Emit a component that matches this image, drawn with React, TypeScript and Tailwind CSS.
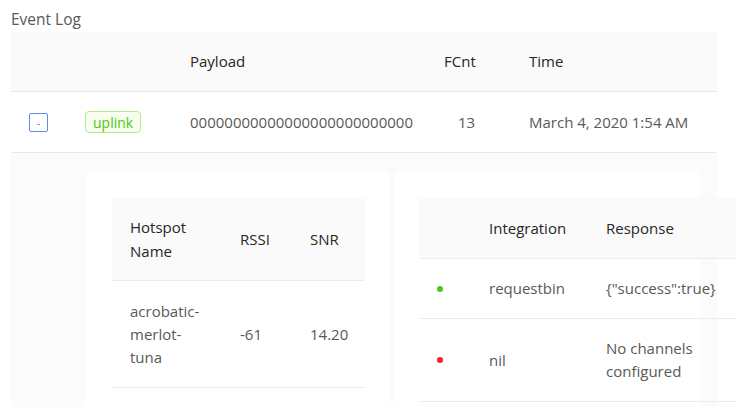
import React from 'react';

const font = { fontFamily: '"Open Sans", Lato, sans-serif' };

function Dot({ color }: { color: string }) {
  return <span className={`inline-block w-[6px] h-[6px] rounded-full ${color}`} />;
}

export default function App() {
  return (
    <div className="w-[740px] h-[407px] overflow-hidden bg-white relative" style={font}>
      <div className="pl-[11px] h-[32px] pt-[8px] flex items-center text-[15.5px] text-[#595959]">Event Log</div>

      <div className="ml-[11px] w-[706px]">
        {/* outer header */}
        <div className="flex h-[60px] items-center bg-[#fafafa] border-b border-[#e8e8e8] text-[15px] text-[#262626]">
          <div className="w-[56px]" />
          <div className="w-[105px]" />
          <div className="w-[254px] pl-[18px]">Payload</div>
          <div className="w-[85px] pl-[18px]">FCnt</div>
          <div className="w-[206px] pl-[18px]">Time</div>
        </div>

        {/* outer row */}
        <div className="flex h-[61px] items-center border-b border-[#e8e8e8] text-[15px] text-[#595959]">
          <div className="w-[56px] pl-[18px]">
            <button className="w-[19px] h-[19px] flex items-center justify-center rounded-[2px] border border-[#5b8def] bg-white text-[#4f7fd6] text-[11px] leading-none">
              -
            </button>
          </div>
          <div className="w-[105px] pl-[18px]">
            <span className="inline-flex items-center h-[22px] px-[7px] rounded-[4px] border border-[#b7eb8f] bg-[#f6ffed] text-[#52c41a] text-[14px]">
              uplink
            </span>
          </div>
          <div className="w-[254px] pl-[18px]">00000000000000000000000000</div>
          <div className="w-[85px] pl-[32px]">13</div>
          <div className="w-[206px] pl-[18px]">March 4, 2020 1:54 AM</div>
        </div>

        {/* expanded area */}
        <div className="h-[260px] bg-[#fbfbfb] pl-[74px] pt-[18px] flex gap-[2px]">
          {/* left card */}
          <div className="w-[306px] h-[260px] bg-white rounded-[7px] pl-[27px] pt-[27px] shrink-0">
            <div className="w-[253px] text-[15px]">
              <div className="flex h-[83px] items-center bg-[#fafafa] border-b border-[#ececec] text-[#262626] leading-[24px]">
                <div className="w-[110px] pl-[18px]">
                  Hotspot
                  <br />
                  Name
                </div>
                <div className="w-[70px] pl-[18px]">RSSI</div>
                <div className="w-[73px] pl-[18px]">SNR</div>
              </div>
              <div className="flex h-[107px] items-center border-b border-[#ececec] text-[#595959] leading-[23px]">
                <div className="w-[110px] pl-[18px]">
                  acrobatic-
                  <br />
                  merlot-
                  <br />
                  tuna
                </div>
                <div className="w-[70px] pl-[18px]">-61</div>
                <div className="w-[73px] pl-[18px]">14.20</div>
              </div>
            </div>
          </div>

          {/* right card */}
          <div className="w-[307px] h-[260px] bg-white rounded-[7px] pl-[26px] pt-[27px] shrink-0">
            <div className="w-[317px] text-[15px]">
              <div className="flex h-[61px] items-center bg-[#fafafa] border-b border-[#ececec] text-[#262626]">
                <div className="w-[52px]" />
                <div className="w-[117px] pl-[18px]">Integration</div>
                <div className="w-[148px] pl-[18px]">Response</div>
              </div>
              <div className="flex h-[60px] items-center border-b border-[#ececec] text-[#595959]">
                <div className="w-[52px] pl-[18px] flex items-center">
                  <Dot color="bg-[#52c41a]" />
                </div>
                <div className="w-[117px] pl-[18px]">requestbin</div>
                <div className="w-[148px] pl-[18px] pr-[10px] whitespace-nowrap">{'{"success":true}'}</div>
              </div>
              <div className="flex h-[83px] items-center border-b border-[#ececec] text-[#595959] leading-[23px]">
                <div className="w-[52px] pl-[18px] flex items-center">
                  <Dot color="bg-[#f5222d]" />
                </div>
                <div className="w-[117px] pl-[18px]">nil</div>
                <div className="w-[148px] pl-[18px] pr-[18px]">
                  No channels
                  <br />
                  configured
                </div>
              </div>
            </div>
          </div>
        </div>
      </div>
    </div>
  );
}
